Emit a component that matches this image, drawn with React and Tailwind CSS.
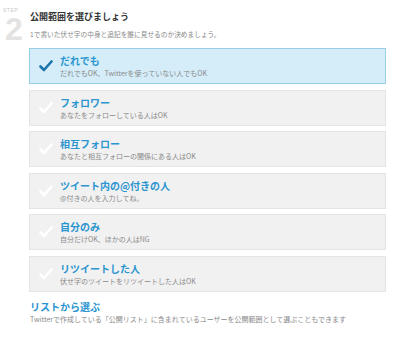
import React from 'react';

const options = [
  { title: 'だれでも', desc: 'だれでもOK、Twitterを使っていない人でもOK', active: true },
  { title: 'フォロワー', desc: 'あなたをフォローしている人はOK' },
  { title: '相互フォロー', desc: 'あなたと相互フォローの関係にある人はOK' },
  { title: 'ツイート内の@付きの人', desc: '@付きの人を入力してね。' },
  { title: '自分のみ', desc: '自分だけOK、ほかの人はNG' },
  { title: 'リツイートした人', desc: '伏せ字のツイートをリツイートした人はOK' },
];

const Check = ({ color }) => (
  <svg width="14" height="12" viewBox="0 0 14 12" className="shrink-0">
    <path d="M1.5 6.5 L5 10 L12.5 1.5" fill="none" stroke={color} strokeWidth="2.6" strokeLinecap="round" strokeLinejoin="round" />
  </svg>
);

const App = () => {
  return (
    <div
      className="w-[400px] h-[338px] bg-white relative overflow-hidden"
      style={{ fontFamily: '"Noto Sans CJK JP", "Noto Sans", sans-serif' }}
    >
      <div className="flex">
        {/* step marker */}
        <div className="w-[29px] shrink-0 pl-[3px] pt-[8px]">
          <div className="text-[5px] leading-[5px] text-[#c8c8c8] tracking-[0.5px]" style={{ fontFamily: '"Liberation Sans", sans-serif' }}>STEP</div>
          <div className="text-[32px] leading-[24px] font-bold text-[#e3e3e3] pl-[2px] mt-[4px]" style={{ fontFamily: '"Liberation Sans", sans-serif' }}>2</div>
        </div>

        <div className="flex-1 pr-[14px] pt-[11px]">
          <h2 className="text-[9px] leading-[12px] font-bold text-[#333] pl-[1px]">公開範囲を選びましょう</h2>
          <p className="text-[6.7px] leading-[10px] text-[#888] mt-[6px] pl-[1px]">1で書いた伏せ字の中身と追記を誰に見せるのか決めましょう。</p>

          <div className="flex flex-col gap-[5.5px] mt-[9px]">
            {options.map((o) => (
              <div
                key={o.title}
                className={
                  o.active
                    ? 'h-[36px] flex items-center border border-[#98cde6] bg-[#d4edf9]'
                    : 'h-[36px] flex items-center border border-[#e4e4e4] bg-[#f1f1f1]'
                }
              >
                <div className="w-[30px] flex justify-center pl-[2px]">
                  <Check color={o.active ? '#1b75a8' : '#ffffff'} />
                </div>
                <div className="flex flex-col">
                  <span className="text-[10px] leading-[13px] font-bold text-[#2b95cf]">{o.title}</span>
                  <span className="text-[7px] leading-[10px] text-[#8a8a8a] mt-[1px]">{o.desc}</span>
                </div>
              </div>
            ))}
          </div>

          <div className="mt-[8px] pl-[1px]">
            <div className="text-[10px] leading-[13px] font-bold text-[#2b95cf]">リストから選ぶ</div>
            <div className="text-[7px] leading-[10px] text-[#8a8a8a] mt-[1px]">Twitterで作成している「公開リスト」に含まれているユーザーを公開範囲として選ぶこともできます</div>
          </div>
        </div>
      </div>
    </div>
  );
};

export default App;
